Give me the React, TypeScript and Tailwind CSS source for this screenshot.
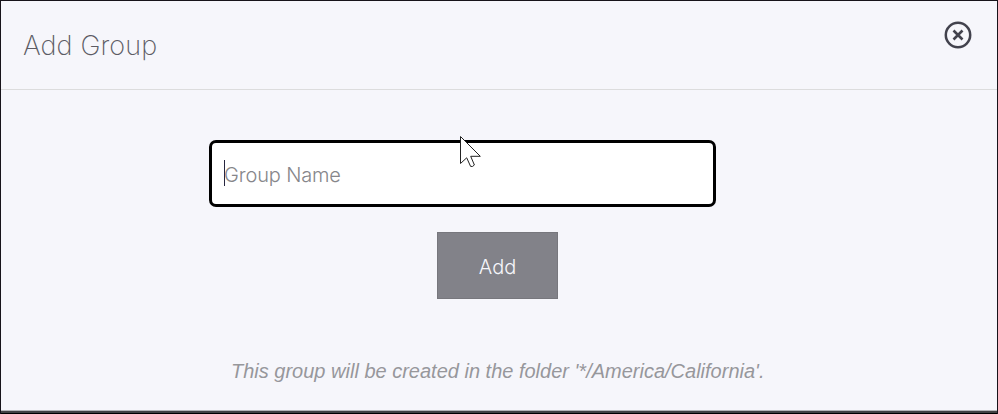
import { useState } from "react";

export default function App() {
  const [groupName, setGroupName] = useState("");
  const folder = "*/America/California";

  return (
    <div className="relative flex h-[414px] w-[998px] flex-col overflow-hidden border border-b-0 border-[#17131a] bg-[#f6f6fb] font-['Inter',sans-serif]">
      <div className="flex h-[89px] shrink-0 items-start justify-between border-b border-[#dcdcdd] pl-[22px] pr-[25px]">
        <h1 className="pt-[25px] text-[27px] leading-[39px] font-[250] tracking-[0.1px] text-[#5c5c64]">
          Add Group
        </h1>
        <button type="button" aria-label="Close" className="mt-[20px]">
          <svg width="28" height="28" viewBox="0 0 28 28" fill="none" stroke="#42424d">
            <circle cx="14" cy="14" r="12.2" strokeWidth="2.5" />
            <path d="M9.5 9.5 L18.5 18.5 M18.5 9.5 L9.5 18.5" strokeWidth="2.6" />
          </svg>
        </button>
      </div>
      <div className="flex flex-1 flex-col pt-[50px]">
        <div className="ml-[208px] flex h-[67px] w-[507px] items-center rounded-[7px] border-[3px] border-black bg-white pl-[12px]">
          <span className="mt-[-2px] h-[26px] w-px shrink-0 bg-[#26263f]"></span>
          <input
            type="text"
            value={groupName}
            onChange={(e) => setGroupName(e.target.value)}
            placeholder="Group Name"
            className="-ml-px w-full bg-transparent pt-[2px] text-[20px] font-[270] tracking-[-0.15px] text-[#42424d] outline-none placeholder:text-[#86868a]"
          />
        </div>
        <button
          type="button"
          className="mt-[25px] ml-[436px] h-[67px] w-[121px] border border-[#77777d] bg-[#828289] pt-[2px] text-[20px] font-light text-[#f6f6fb]"
        >
          Add
        </button>
        <p className="mt-[58px] pl-[230px] font-['Liberation_Sans',sans-serif] text-[20px] leading-[28px] whitespace-nowrap text-[#97979b] italic">
          This group will be created in the folder '{folder}'.
        </p>
      </div>
      <div className="h-[4px] shrink-0 border-t border-b border-t-[#b5b5b8] border-b-black bg-[#414143]"></div>
      {/* mouse pointer */}
      <svg
        className="absolute top-[134px] left-[458px]"
        width="24"
        height="36"
        viewBox="0 0 24 36"
        fill="#fff"
        stroke="#222"
        strokeWidth="1"
      >
        <path d="M1.5 1.5 V28.5 L7.7 22.8 L11.6 31.4 Q13.5 32.2 15.4 30 L11.7 21.3 H21.3 Z" />
      </svg>
    </div>
  );
}
